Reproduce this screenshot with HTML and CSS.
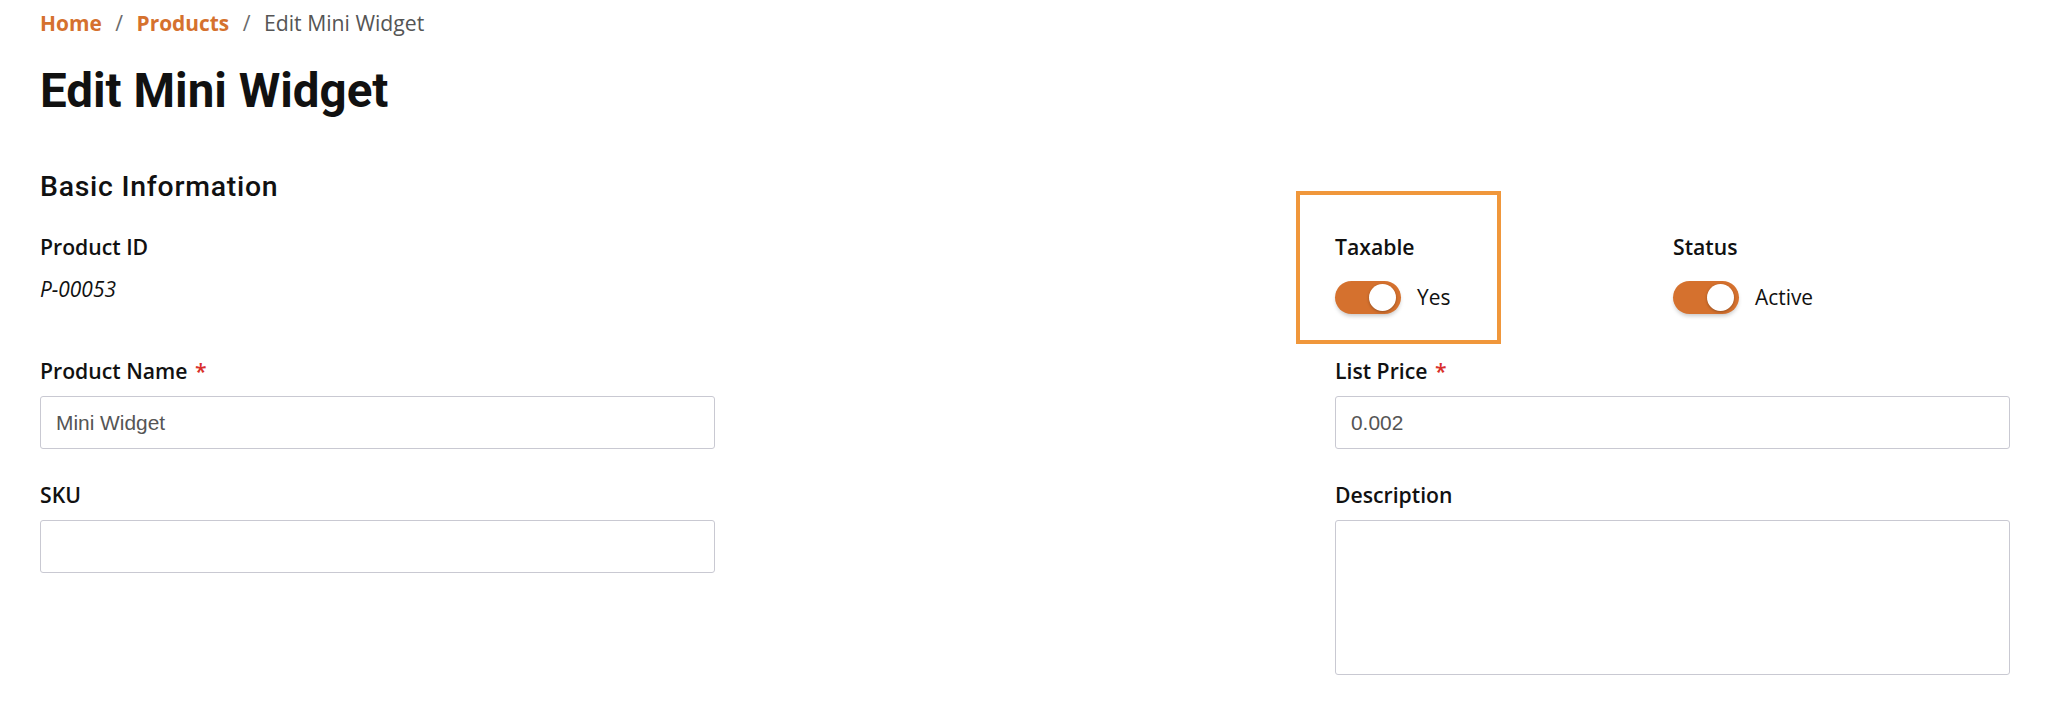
FILE: index.html
```html
<!DOCTYPE html>
<html lang="en">
<head>
<meta charset="utf-8">
<title>Edit Mini Widget</title>
<link rel="stylesheet" href="styles.css">
</head>
<body>
<div class="page">
  <nav class="breadcrumb">
    <a class="crumb-link" href="#">Home</a>
    <span class="crumb-sep">/</span>
    <a class="crumb-link" href="#">Products</a>
    <span class="crumb-sep">/</span>
    <span class="crumb-current">Edit Mini Widget</span>
  </nav>

  <h1 class="page-title">Edit Mini Widget</h1>

  <section class="section">
    <h2 class="section-title">Basic Information</h2>

    <div class="form-grid">
      <div class="field row-first">
        <div class="field-label">Product ID</div>
        <div class="field-value">P-00053</div>
      </div>

      <div class="toggle-pair row-first">
        <div class="field toggle-field">
          <span class="highlight-box"></span>
          <div class="field-label">Taxable</div>
          <div class="toggle-row">
            <span class="toggle"><span class="toggle-knob"></span></span>
            <span class="toggle-text">Yes</span>
          </div>
        </div>
        <div class="field toggle-field">
          <div class="field-label">Status</div>
          <div class="toggle-row">
            <span class="toggle"><span class="toggle-knob"></span></span>
            <span class="toggle-text">Active</span>
          </div>
        </div>
      </div>

      <div class="field">
        <label class="field-label">Product Name <span class="required">*</span></label>
        <input class="text-input" type="text" value="Mini Widget">
      </div>

      <div class="field">
        <label class="field-label">List Price <span class="required">*</span></label>
        <input class="text-input" type="text" value="0.002">
      </div>

      <div class="field">
        <label class="field-label">SKU</label>
        <input class="text-input" type="text" value="">
      </div>

      <div class="field">
        <label class="field-label">Description</label>
        <textarea class="text-area"></textarea>
      </div>
    </div>
  </section>
</div>
</body>
</html>
```

FILE: styles.css
```css
* {
  box-sizing: border-box;
}

html, body {
  margin: 0;
  padding: 0;
  background: #ffffff;
}

body {
  font-family: "Open Sans", "Noto Sans", "Liberation Sans", sans-serif;
  color: #111111;
}

.page {
  padding: 9px 36px 0 40px;
}

/* Breadcrumb */
.breadcrumb {
  display: flex;
  align-items: baseline;
  font-size: 21.2px;
  line-height: 28px;
  height: 28px;
}

.crumb-link {
  color: #d5712e;
  font-weight: 700;
  font-size: 20.9px;
  text-decoration: none;
}

.crumb-sep {
  color: #6b6b6b;
  margin: 0 13.5px;
}

.crumb-current {
  color: #555555;
}

/* Headings */
.page-title {
  font-family: Roboto, "Liberation Sans", sans-serif;
  font-weight: 700;
  font-size: 47.5px;
  line-height: 56px;
  margin: 26px 0 0;
  color: #111111;
}

.section-title {
  font-family: Roboto, "Liberation Sans", sans-serif;
  font-weight: 500;
  font-size: 28.4px;
  letter-spacing: 0.75px;
  line-height: 32px;
  margin: 51.6px 0 0;
  color: #111111;
}

/* Form grid */
.form-grid {
  display: grid;
  grid-template-columns: 675px 675px;
  column-gap: 620px;
  row-gap: 31.5px;
  margin-top: 30px;
}

.row-first {
  margin-bottom: 12px;
}

.field {
  display: flex;
  flex-direction: column;
}

.field-label {
  display: block;
  font-size: 21.2px;
  line-height: 28px;
  font-weight: 600;
  color: #111111;
  margin-bottom: 11px;
}

.required {
  color: #d9302c;
  margin-left: 2px;
}

.field-value {
  font-size: 20.9px;
  line-height: 28px;
  font-style: italic;
  color: #111111;
  margin-top: 3px;
}

.text-input,
.text-area {
  display: block;
  width: 675px;
  margin: 0;
  border: 1px solid #c9c9d2;
  border-radius: 3px;
  background: #ffffff;
  font-family: "Liberation Sans", Arial, sans-serif;
  font-size: 20.9px;
  color: #555555;
  padding: 0 15px;
  outline: none;
}

.text-input {
  height: 53px;
}

.text-area {
  height: 155px;
  resize: none;
  padding: 12px 15px;
}

/* Toggles */
.toggle-pair {
  display: grid;
  grid-template-columns: 338px 337px;
}

.toggle-field {
  position: relative;
}

.toggle-field .field-label {
  margin-bottom: 20px;
}

.toggle-row {
  display: flex;
  align-items: center;
  height: 33px;
}

.toggle {
  position: relative;
  display: inline-block;
  width: 66px;
  height: 33px;
  border-radius: 17px;
  background: #d5712e;
  box-shadow: 0 3px 4px -1px rgba(0, 0, 0, 0.22);
  flex: none;
}

.toggle-knob {
  position: absolute;
  top: 3px;
  left: 34px;
  width: 27px;
  height: 27px;
  border-radius: 50%;
  background: #ffffff;
  box-shadow: 0 1px 3px rgba(0, 0, 0, 0.3);
}

.toggle-text {
  font-size: 20.9px;
  line-height: 28px;
  color: #111111;
  margin-left: 16px;
}

.highlight-box {
  position: absolute;
  left: -39px;
  top: -42px;
  width: 205px;
  height: 153px;
  border: 4px solid #f0973b;
  pointer-events: none;
}
```
